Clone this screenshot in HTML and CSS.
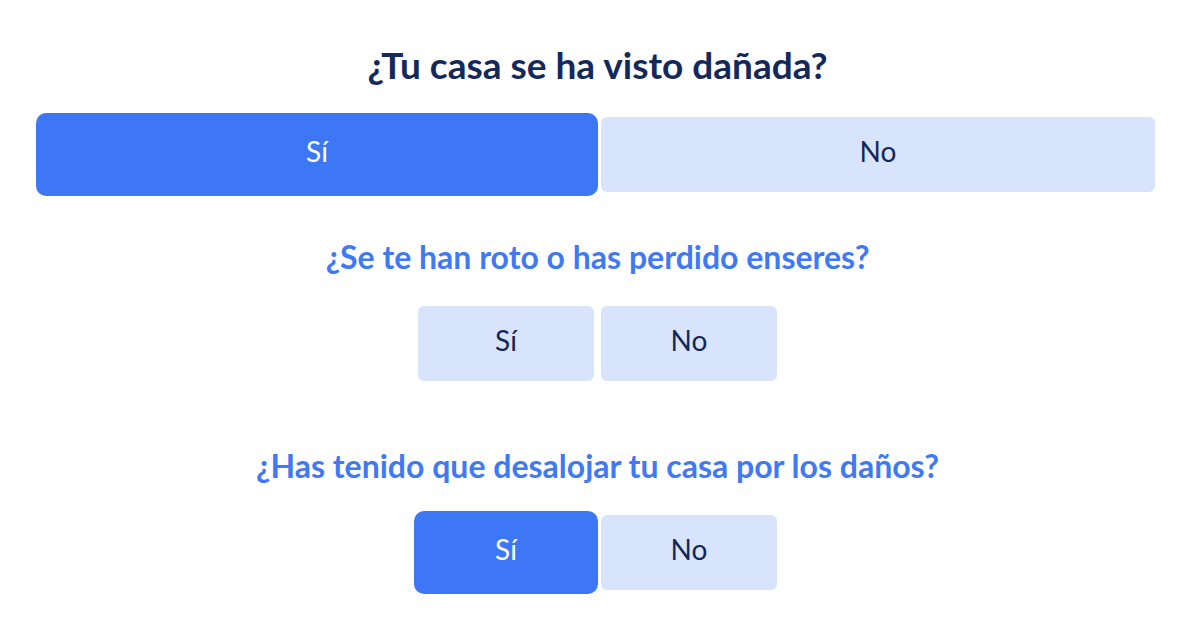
FILE: index.html
```html
<!DOCTYPE html>
<html lang="es">
<head>
<meta charset="utf-8">
<title>Daños</title>
<link rel="stylesheet" href="styles.css">
</head>
<body>
<main class="form">
  <section class="question q-main">
    <h2 class="title title-dark">¿Tu casa se ha visto dañada?</h2>
    <div class="options options-wide">
      <button class="opt selected">Sí</button>
      <button class="opt">No</button>
    </div>
  </section>
  <section class="question q-second">
    <h2 class="title title-blue">¿Se te han roto o has perdido enseres?</h2>
    <div class="options options-small">
      <button class="opt">Sí</button>
      <button class="opt">No</button>
    </div>
  </section>
  <section class="question q-third">
    <h2 class="title title-blue">¿Has tenido que desalojar tu casa por los daños?</h2>
    <div class="options options-small">
      <button class="opt selected">Sí</button>
      <button class="opt">No</button>
    </div>
  </section>
</main>
</body>
</html>
```
FILE: styles.css
```css
* { box-sizing: border-box; }
html, body { margin: 0; padding: 0; background: #ffffff; }
body {
  font-family: Lato, "Open Sans", sans-serif;
  width: 1200px;
  height: 619px;
  overflow: hidden;
}
.form {
  padding: 45px 45px 0 40px;
  display: flex;
  flex-direction: column;
}
.question { display: flex; flex-direction: column; align-items: center; }
.q-second { margin-top: 45px; }
.q-third { margin-top: 65px; }
.title {
  margin: 0 0 29px 0;
  font-size: 32px;
  line-height: 40px;
  font-weight: 700;
  text-align: center;
}
.title-dark { color: #14295b; font-size: 37px; margin-bottom: 32px; }
.title-blue { color: #3f79f4; }
.options { display: flex; gap: 7px; justify-content: center; }
.options-wide { width: 100%; }
.options-wide .opt { flex: 1 1 0; }
.options-small .opt { width: 176px; }
.opt {
  height: 75px;
  border: 0;
  border-radius: 6px;
  background: #d8e4fc;
  color: #13265a;
  font-family: Lato, "Open Sans", sans-serif;
  font-size: 28px;
  font-weight: 400;
  padding: 0 0 8px 0;
  cursor: pointer;
}
.opt.selected {
  background: #3e77f5;
  color: #ffffff;
  box-shadow: 0 0 0 4px #3e77f5;
}
```
